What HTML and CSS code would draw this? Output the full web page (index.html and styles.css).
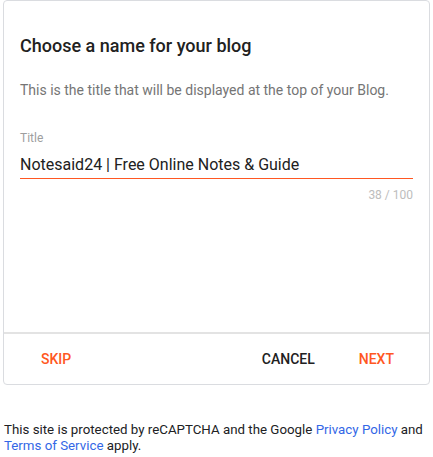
FILE: index.html
```html
<!DOCTYPE html>
<html lang="en">
<head>
  <meta charset="UTF-8">
  <title>Choose a name for your blog</title>
  <link rel="stylesheet" href="styles.css">
</head>
<body>
  <div class="dialog">
    <div class="dialog-body">
      <h2>Choose a name for your blog</h2>
      <p class="hint">This is the title that will be displayed at the top of your Blog.</p>

      <div class="field">
        <label for="blogTitle">Title</label>
        <input id="blogTitle" type="text" value="Notesaid24 | Free Online Notes &amp; Guide" maxlength="100">
        <div class="counter">38 / 100</div>
      </div>
    </div>

    <div class="dialog-actions">
      <button class="btn accent">Skip</button>
      <span class="spacer"></span>
      <button class="btn">Cancel</button>
      <button class="btn accent">Next</button>
    </div>
  </div>

  <p class="legal">
    This site is protected by reCAPTCHA and the Google
    <a href="#">Privacy Policy</a> and
    <a href="#">Terms of Service</a> apply.
  </p>
</body>
</html>
```

FILE: styles.css
```css
body {
  margin: 0;
  font-family: Roboto, "Liberation Sans", Arial, sans-serif;
  color: #212121;
  background: #fff;
}
.dialog {
  margin: 0 3px;
  border: 1px solid #dadce0;
  border-radius: 4px;
}
.dialog-body {
  height: 331px;
  padding: 0 16px;
  box-sizing: border-box;
  padding-top: 33px;
}
h2 {
  margin: 0;
  font-size: 18px;
  font-weight: 500;
  line-height: 24px;
  color: #212121;
}
.hint {
  margin: 22px 0 0;
  font-size: 14px;
  line-height: 20px;
  color: #757575;
}
.field {
  margin-top: 30px;
}
.field label {
  display: block;
  font-size: 12px;
  line-height: 16px;
  color: #9e9e9e;
}
.field input {
  display: block;
  width: 100%;
  box-sizing: border-box;
  margin-top: 9px;
  padding: 0 0 3px;
  border: none;
  border-bottom: 1px solid #ff5722;
  outline: none;
  font-family: inherit;
  font-size: 16px;
  line-height: 20px;
  color: #212121;
  background: transparent;
}
.counter {
  margin-top: 8px;
  text-align: right;
  font-size: 12px;
  line-height: 16px;
  color: #bdbdbd;
}
.dialog-actions {
  display: flex;
  align-items: center;
  height: 50px;
  padding: 0 13px 0 15px;
  border-top: 2px solid #e3e3e3;
}
.spacer {
  flex: 1;
}
.btn {
  background: none;
  border: none;
  padding: 8px 22px;
  font-family: inherit;
  font-size: 14px;
  font-weight: 500;
  text-transform: uppercase;
  color: #212121;
  cursor: pointer;
}
.btn.accent {
  color: #ff5722;
}
.legal {
  margin: 37px 4px 0;
  font-size: 13.3px;
  line-height: 16px;
  color: #202124;
}
.legal a {
  color: #3367e6;
  text-decoration: none;
}
```
